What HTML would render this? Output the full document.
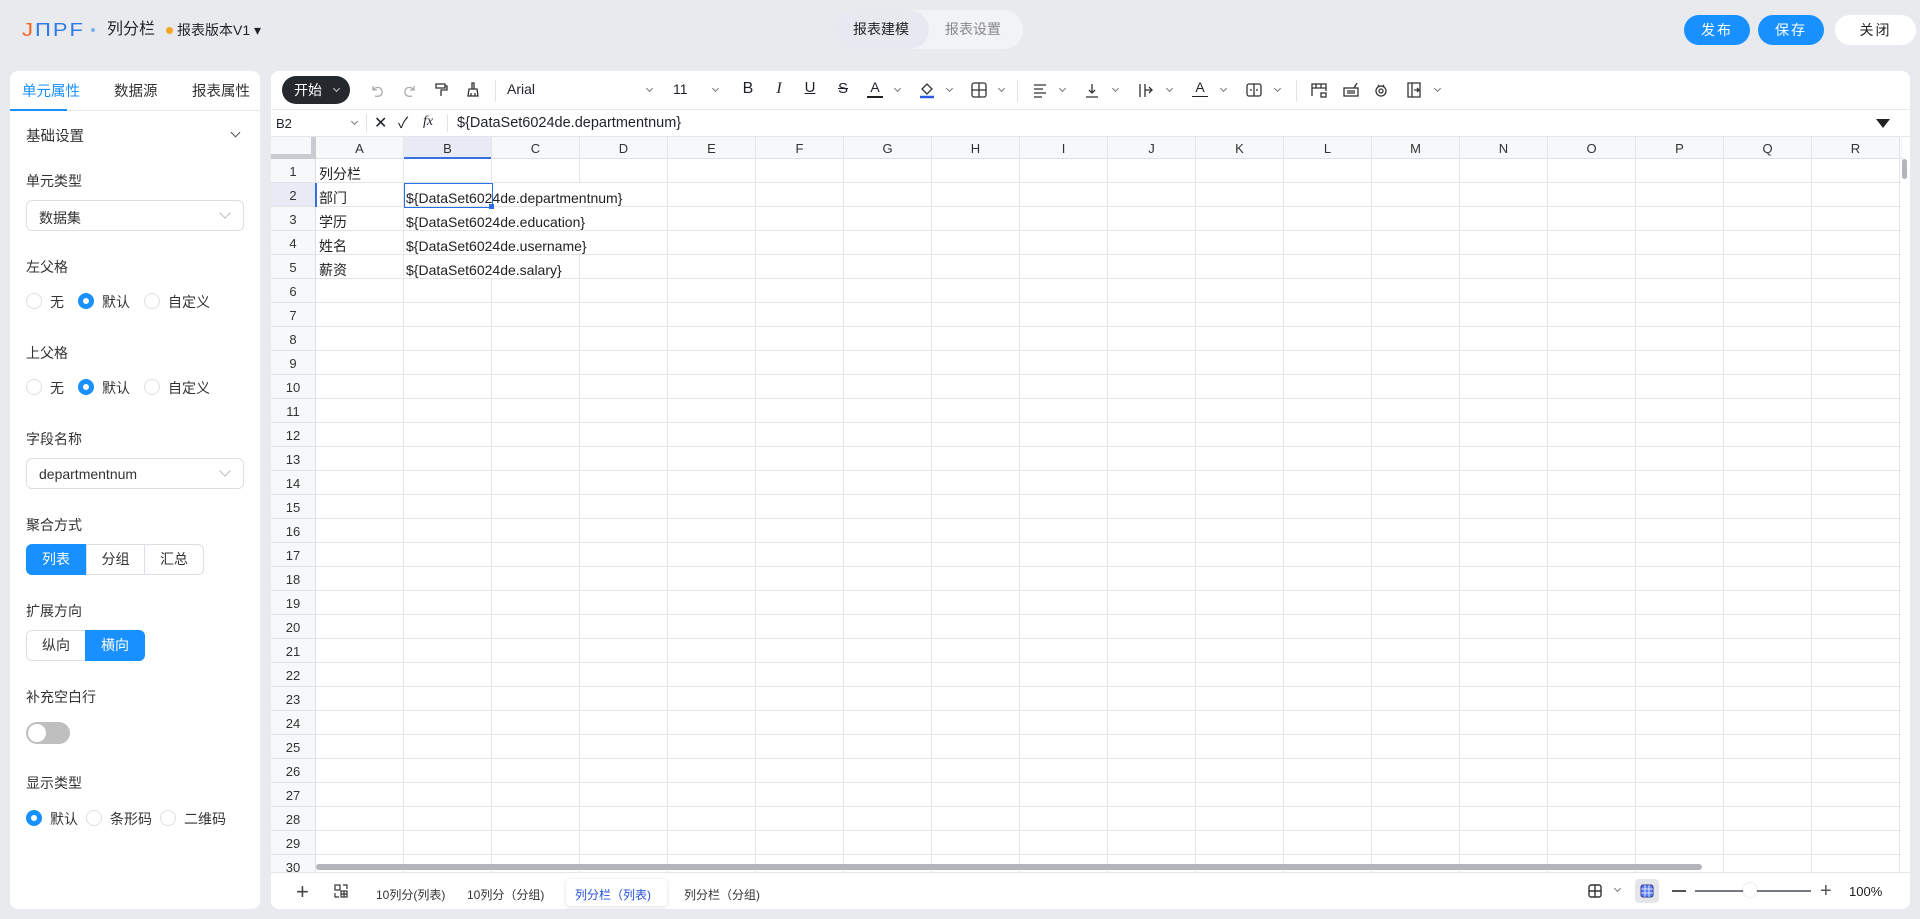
<!DOCTYPE html>
<html><head><meta charset="utf-8"><style>
*{box-sizing:border-box;margin:0;padding:0}
body{width:1920px;height:919px;background:#e9eaee;font-family:"Liberation Sans","Noto Sans CJK SC",sans-serif;color:#1f2329;position:relative;overflow:hidden;font-size:14px}
.a{position:absolute}
.panel{background:#fff;border-radius:8px}
.lbl{position:absolute;left:26px;font-size:14px;color:#333}
.radio{position:absolute;width:16px;height:16px;border:1px solid #dcdfe6;border-radius:50%;background:#fff}
.radio.on{border:5px solid #1890ff}
.rt{position:absolute;font-size:14px;color:#333}
.sel{position:absolute;left:26px;width:218px;height:31px;border:1px solid #dcdfe6;border-radius:6px;font-size:14px;padding:7px 12px;color:#333}
.sel:after{content:"";position:absolute;right:14px;top:8px;width:7px;height:7px;border-right:1px solid #bbb;border-bottom:1px solid #bbb;transform:rotate(45deg)}
.seg{position:absolute;height:31px;border:1px solid #dcdfe6;font-size:14px;text-align:center;line-height:29px;color:#333;background:#fff}
.seg.on{background:#1890ff;color:#fff;border-color:#1890ff}
.ic{position:absolute;top:80px;width:20px;height:20px}
.chev{position:absolute;top:86px;width:5px;height:5px;border-right:1px solid #777;border-bottom:1px solid #777;transform:rotate(45deg)}
.cell{position:absolute;font-size:14px;color:#222;line-height:24px;white-space:nowrap;padding-top:3px}
.rn{height:24px;line-height:26px;text-align:center;font-size:13px;color:#333;border-bottom:1px solid #e3e5e9}
.ch{position:absolute;top:137px;width:88px;height:22px;line-height:23px;text-align:center;font-size:13px;color:#333;border-right:1px solid #e3e5e9}
.btn{position:absolute;top:15px;height:30px;border-radius:15px;font-size:14px;text-align:center;line-height:30px;letter-spacing:2px}
.tab{position:absolute;top:884px;font-size:12px;color:#333;line-height:22px}
</style></head><body>
<!-- header -->
<div class="a" style="left:22px;top:17px;font-size:22px;letter-spacing:2px;line-height:26px;transform:scaleY(0.85)"><span style="color:#f0621f">J</span><span style="color:#2f7be8">ΠPF</span></div>
<div class="a" style="left:91px;top:28px;width:4px;height:4px;border-radius:50%;background:#7fb0ee"></div>
<div class="a" style="left:107px;top:19px;font-size:16px;line-height:22px">列分栏</div>
<div class="a" style="left:166px;top:27px;width:7px;height:7px;border-radius:50%;background:#f5a623"></div>
<div class="a" style="left:177px;top:20px;font-size:14px;line-height:20px">报表版本V1 ▾</div>
<div class="a" style="left:833px;top:10px;width:190px;height:39px;border-radius:20px;background:#f2f3f6"></div>
<div class="a" style="left:833px;top:10px;width:96px;height:39px;border-radius:20px;background:#e6e9f0;text-align:center;line-height:39px;font-size:14px;color:#222">报表建模</div>
<div class="a" style="left:945px;top:10px;line-height:39px;font-size:14px;color:#888">报表设置</div>
<div class="btn" style="left:1684px;width:66px;background:#1890ff;color:#fff">发布</div>
<div class="btn" style="left:1758px;width:66px;background:#1890ff;color:#fff">保存</div>
<div class="btn" style="left:1835px;width:81px;background:#fff;color:#222">关闭</div>

<!-- left panel -->
<div class="a panel" style="left:10px;top:71px;width:250px;height:838px"></div>
<div class="a" style="left:10px;top:110px;width:250px;height:1px;background:#e8e8e8"></div>
<div class="a" style="left:10px;top:109px;width:57px;height:2px;background:#1890ff"></div>
<div class="a" style="left:22px;top:80px;font-size:14.5px;color:#1890ff">单元属性</div>
<div class="a" style="left:114px;top:80px;font-size:14.5px;color:#333">数据源</div>
<div class="a" style="left:192px;top:80px;font-size:14.5px;color:#333">报表属性</div>
<div class="lbl" style="left:26px;top:125px;font-size:14.5px">基础设置</div>
<div class="a" style="left:232px;top:129px;width:7px;height:7px;border-right:1px solid #555;border-bottom:1px solid #555;transform:rotate(45deg)"></div>
<div class="lbl" style="top:171px">单元类型</div>
<div class="sel" style="top:200px">数据集</div>
<div class="lbl" style="top:257px">左父格</div>
<div class="radio" style="left:26px;top:293px"></div><div class="rt" style="left:50px;top:292px">无</div>
<div class="radio on" style="left:78px;top:293px"></div><div class="rt" style="left:102px;top:292px">默认</div>
<div class="radio" style="left:144px;top:293px"></div><div class="rt" style="left:168px;top:292px">自定义</div>
<div class="lbl" style="top:343px">上父格</div>
<div class="radio" style="left:26px;top:379px"></div><div class="rt" style="left:50px;top:378px">无</div>
<div class="radio on" style="left:78px;top:379px"></div><div class="rt" style="left:102px;top:378px">默认</div>
<div class="radio" style="left:144px;top:379px"></div><div class="rt" style="left:168px;top:378px">自定义</div>
<div class="lbl" style="top:429px">字段名称</div>
<div class="sel" style="top:458px">departmentnum</div>
<div class="lbl" style="top:515px">聚合方式</div>
<div class="seg on" style="left:26px;top:544px;width:60px;border-radius:6px 0 0 6px">列表</div>
<div class="seg" style="left:86px;top:544px;width:59px">分组</div>
<div class="seg" style="left:144px;top:544px;width:60px;border-radius:0 6px 6px 0">汇总</div>
<div class="lbl" style="top:601px">扩展方向</div>
<div class="seg" style="left:26px;top:630px;width:60px;border-radius:6px 0 0 6px">纵向</div>
<div class="seg on" style="left:85px;top:630px;width:60px;border-radius:0 6px 6px 0">横向</div>
<div class="lbl" style="top:687px">补充空白行</div>
<div class="a" style="left:26px;top:722px;width:44px;height:22px;border-radius:11px;background:#bfbfbf"></div>
<div class="a" style="left:28px;top:724px;width:18px;height:18px;border-radius:50%;background:#fff"></div>
<div class="lbl" style="top:773px">显示类型</div>
<div class="radio on" style="left:26px;top:810px"></div><div class="rt" style="left:50px;top:809px">默认</div>
<div class="radio" style="left:86px;top:810px"></div><div class="rt" style="left:110px;top:809px">条形码</div>
<div class="radio" style="left:160px;top:810px"></div><div class="rt" style="left:184px;top:809px">二维码</div>

<!-- main panel -->
<div class="a panel" style="left:271px;top:71px;width:1639px;height:838px"></div>
<div class="a" style="left:282px;top:76px;width:68px;height:28px;border-radius:14px;background:#25282d;color:#fff;font-size:14px;line-height:28px;padding-left:12px">开始<span style="position:absolute;right:11px;top:10px;width:5px;height:5px;border-right:1px solid #ccc;border-bottom:1px solid #ccc;transform:rotate(45deg)"></span></div>
<svg class="ic" style="left:367px" viewBox="0 0 20 20" fill="none" stroke="#aaa" stroke-width="1.3"><path d="M6 6v4h4M6 10c2-3 8-4 9 1s-4 6-7 5"/></svg>
<svg class="ic" style="left:400px" viewBox="0 0 20 20" fill="none" stroke="#aaa" stroke-width="1.3"><path d="M14 6v4h-4M14 10c-2-3-8-4-9 1s4 6 7 5"/></svg>
<svg class="ic" style="left:431px" viewBox="0 0 20 20" fill="none" stroke="#333" stroke-width="1.3"><path d="M5 4h9v4H5zM14 6h2v4h-6v6"/></svg>
<svg class="ic" style="left:463px" viewBox="0 0 20 20" fill="none" stroke="#333" stroke-width="1.3"><path d="M9 3h2v6h-2zM6 9h8l1 7H5zM8 13v3M12 13v3"/></svg>
<div class="a" style="left:495px;top:80px;width:1px;height:22px;background:#e3e3e3"></div>
<div class="a" style="left:507px;top:81px;font-size:14px">Arial</div>
<div class="chev" style="left:647px"></div>
<div class="a" style="left:673px;top:81px;font-size:14px">11</div>
<div class="chev" style="left:713px"></div>
<div class="a" style="left:740px;top:80px;font-size:16px;width:16px;text-align:center">B</div>
<div class="a" style="left:771px;top:80px;font-size:16px;font-style:italic;font-family:'Liberation Serif';width:16px;text-align:center">I</div>
<div class="a" style="left:802px;top:79px;font-size:15px;text-decoration:underline;width:16px;text-align:center">U</div>
<div class="a" style="left:835px;top:80px;font-size:15px;text-decoration:line-through;width:16px;text-align:center">S</div>
<div class="a" style="left:867px;top:79px;font-size:14px;width:16px;text-align:center;border-bottom:2px solid #222;line-height:17px">A</div><div class="chev" style="left:895px"></div>
<svg class="ic" style="left:917px" viewBox="0 0 20 20" fill="none" stroke="#333" stroke-width="1.3"><path d="M5 9l5-5 5 5-5 5z"/><path d="M3 17h14" stroke="#2f5bea" stroke-width="2.5"/></svg><div class="chev" style="left:947px"></div>
<svg class="ic" style="left:969px" viewBox="0 0 20 20" fill="none" stroke="#333" stroke-width="1.3"><rect x="3" y="3" width="14" height="14" rx="2"/><path d="M10 3v14M3 10h14"/></svg><div class="chev" style="left:999px"></div>
<div class="a" style="left:1017px;top:80px;width:1px;height:22px;background:#e3e3e3"></div>
<svg class="ic" style="left:1030px" viewBox="0 0 20 20" fill="none" stroke="#333" stroke-width="1.3"><path d="M4 5h12M4 9h9M4 13h12M4 17h8"/></svg><div class="chev" style="left:1060px"></div>
<svg class="ic" style="left:1082px" viewBox="0 0 20 20" fill="none" stroke="#333" stroke-width="1.3"><path d="M10 4v9M7 10l3 3 3-3M4 17h12"/></svg><div class="chev" style="left:1113px"></div>
<svg class="ic" style="left:1136px" viewBox="0 0 20 20" fill="none" stroke="#333" stroke-width="1.3"><path d="M4 4v13M9 4v13M9 10h7M13 7l3 3-3 3"/></svg><div class="chev" style="left:1167px"></div>
<div class="a" style="left:1192px;top:79px;font-size:14px;width:16px;text-align:center;border-bottom:1px solid #222;line-height:17px">A</div><div class="chev" style="left:1221px"></div>
<svg class="ic" style="left:1244px" viewBox="0 0 20 20" fill="none" stroke="#333" stroke-width="1.3"><rect x="3" y="4" width="14" height="12" rx="2"/><path d="M10 4v12M6 10h2M12 10h2"/></svg><div class="chev" style="left:1275px"></div>
<div class="a" style="left:1296px;top:80px;width:1px;height:22px;background:#e3e3e3"></div>
<svg class="ic" style="left:1309px" viewBox="0 0 20 20" fill="none" stroke="#333" stroke-width="1.3"><path d="M3 16V4h14v7M3 8h14M7 4v4M12 4v4"/><rect x="12" y="13" width="5" height="4"/></svg>
<svg class="ic" style="left:1341px" viewBox="0 0 20 20" fill="none" stroke="#333" stroke-width="1.3"><rect x="3" y="8" width="14" height="8"/><path d="M6 11h8M6 13h8M13 8l3-5"/></svg>
<svg class="ic" style="left:1371px" viewBox="0 0 20 20" fill="none" stroke="#333" stroke-width="1.3"><circle cx="10" cy="11" r="5"/><circle cx="10" cy="11" r="2"/><path d="M7 5l1 1M13 5l-1 1"/></svg>
<svg class="ic" style="left:1404px" viewBox="0 0 20 20" fill="none" stroke="#333" stroke-width="1.3"><path d="M4 3h12v14H4zM8 3v14M10 10h5M13 8l2 2-2 2"/></svg><div class="chev" style="left:1435px"></div>
<div class="a" style="left:271px;top:109px;width:1639px;height:1px;background:#e8e8e8"></div>
<!-- formula bar -->
<div class="a" style="left:276px;top:116px;font-size:13px">B2</div>
<div class="chev" style="left:352px;top:119px"></div>
<div class="a" style="left:366px;top:114px;width:1px;height:18px;background:#e3e3e3"></div>
<div class="a" style="left:374px;top:112px;font-size:16px;line-height:24px">✕</div>
<div class="a" style="left:398px;top:112px;font-size:15px;line-height:24px">✓</div>
<div class="a" style="left:423px;top:114px;font-size:14px;font-style:italic;font-family:'Liberation Serif'">fx</div>
<div class="a" style="left:447px;top:114px;width:1px;height:18px;background:#e3e3e3"></div>
<div class="a" style="left:457px;top:115px;font-size:14.5px">${DataSet6024de.departmentnum}</div>
<div class="a" style="left:1876px;top:119px;width:0;height:0;border-left:7px solid transparent;border-right:7px solid transparent;border-top:9px solid #222"></div>
<div class="a" style="left:271px;top:136px;width:1639px;height:1px;background:#e3e5e9"></div>

<!-- column header -->
<div class="a" style="left:271px;top:137px;width:1632px;height:22px;background:#f7f8fa;border-bottom:1px solid #dcdfe4"></div>
<div class="a" style="left:311px;top:137px;width:5px;height:22px;background:#c9cbd0"></div>
<div class="a" style="left:271px;top:154px;width:45px;height:5px;background:#c9cbd0"></div>
<div class="a" style="left:404px;top:137px;width:88px;height:22px;background:#e8ebf5;border-bottom:2px solid #3a6fe0"></div>
<div class="ch" style="left:316px">A</div><div class="ch" style="left:404px">B</div><div class="ch" style="left:492px">C</div><div class="ch" style="left:580px">D</div><div class="ch" style="left:668px">E</div><div class="ch" style="left:756px">F</div><div class="ch" style="left:844px">G</div><div class="ch" style="left:932px">H</div><div class="ch" style="left:1020px">I</div><div class="ch" style="left:1108px">J</div><div class="ch" style="left:1196px">K</div><div class="ch" style="left:1284px">L</div><div class="ch" style="left:1372px">M</div><div class="ch" style="left:1460px">N</div><div class="ch" style="left:1548px">O</div><div class="ch" style="left:1636px">P</div><div class="ch" style="left:1724px">Q</div><div class="ch" style="left:1812px">R</div>

<!-- grid -->
<div class="a" style="left:316px;top:159px;width:1587px;height:720px;background-image:linear-gradient(to right,transparent 87px,#e3e5e9 87px),linear-gradient(to bottom,transparent 23px,#e3e5e9 23px);background-size:88px 100%,100% 24px"></div>
<div class="a" style="left:271px;top:159px;width:45px;height:720px;background:#f7f8fa;border-right:1px solid #dcdfe4">
<div class="rn">1</div><div class="rn" style="background:#e8ebf5">2</div><div class="rn">3</div><div class="rn">4</div><div class="rn">5</div><div class="rn">6</div><div class="rn">7</div><div class="rn">8</div><div class="rn">9</div><div class="rn">10</div><div class="rn">11</div><div class="rn">12</div><div class="rn">13</div><div class="rn">14</div><div class="rn">15</div><div class="rn">16</div><div class="rn">17</div><div class="rn">18</div><div class="rn">19</div><div class="rn">20</div><div class="rn">21</div><div class="rn">22</div><div class="rn">23</div><div class="rn">24</div><div class="rn">25</div><div class="rn">26</div><div class="rn">27</div><div class="rn">28</div><div class="rn">29</div><div class="rn">30</div>
</div>
<div class="a" style="left:315px;top:183px;width:2px;height:24px;background:#3a6fe0"></div>
<div class="a" style="left:404px;top:183px;width:230px;height:23px;background:#fff"></div>
<div class="a" style="left:404px;top:207px;width:190px;height:23px;background:#fff"></div>
<div class="a" style="left:404px;top:231px;width:190px;height:23px;background:#fff"></div>
<div class="a" style="left:404px;top:255px;width:170px;height:23px;background:#fff"></div>
<div class="a" style="left:579px;top:255px;width:1px;height:24px;background:#e3e5e9"></div>
<div class="a" style="left:404px;top:183px;width:89px;height:25px;border:1px solid #2b6de5"></div>
<div class="a" style="left:489px;top:204px;width:5px;height:5px;background:#2b6de5"></div>
<div class="cell" style="left:319px;top:159px">列分栏</div>
<div class="cell" style="left:319px;top:183px">部门</div>
<div class="cell" style="left:319px;top:207px">学历</div>
<div class="cell" style="left:319px;top:231px">姓名</div>
<div class="cell" style="left:319px;top:255px">薪资</div>
<div class="cell" style="left:406px;top:183px">${DataSet6024de.departmentnum}</div>
<div class="cell" style="left:406px;top:207px">${DataSet6024de.education}</div>
<div class="cell" style="left:406px;top:231px">${DataSet6024de.username}</div>
<div class="cell" style="left:406px;top:255px">${DataSet6024de.salary}</div>
<div class="a" style="left:1901px;top:159px;width:9px;height:720px;background:#fff"></div>
<div class="a" style="left:1902px;top:159px;width:5px;height:20px;border-radius:3px;background:#b3b5ba"></div>
<div class="a" style="left:316px;top:864px;width:1386px;height:6px;border-radius:3px;background:#b3b5ba"></div>

<!-- bottom bar -->
<div class="a" style="left:271px;top:872px;width:1639px;height:37px;background:#fff;border-top:1px solid #e3e5e9;border-radius:0 0 8px 8px"></div>
<div class="a" style="left:296px;top:880px;font-size:22px;color:#444;line-height:24px">+</div>
<svg class="a" style="left:333px;top:883px" width="16" height="16" viewBox="0 0 16 16" fill="none" stroke="#333" stroke-width="1.2"><rect x="2" y="2" width="5" height="5"/><rect x="8" y="8" width="6" height="6"/><path d="M11 8v6M8 11h6M10 2h4v4M2 10v4h4"/></svg>
<div class="tab" style="left:376px">10列分(列表)</div>
<div class="tab" style="left:467px">10列分（分组)</div>
<div class="a" style="left:566px;top:879px;width:101px;height:27px;border-radius:4px;background:#fff;box-shadow:0 1px 4px rgba(0,0,0,.12)"></div>
<div class="tab" style="left:575px;color:#2452d6">列分栏（列表)</div>
<div class="tab" style="left:684px">列分栏（分组)</div>
<svg class="a" style="left:1587px;top:883px" width="16" height="16" viewBox="0 0 16 16" fill="none" stroke="#333" stroke-width="1.4"><rect x="2" y="2" width="12" height="12" rx="2"/><path d="M8 2v12M2 8h12"/></svg>
<div class="a" style="left:1615px;top:886px;width:5px;height:5px;border-right:1px solid #777;border-bottom:1px solid #777;transform:rotate(45deg)"></div>
<div class="a" style="left:1635px;top:879px;width:24px;height:24px;border-radius:4px;background:#e4e6ea"></div>
<svg class="a" style="left:1639px;top:883px" width="16" height="16" viewBox="0 0 16 16" fill="#5b7cf5" stroke="#2a3a8a" stroke-width="1"><rect x="2" y="2" width="12" height="12" rx="2"/><path d="M6 2v12M10 2v12M2 6h12M2 10h12" stroke="#fff" stroke-width=".8"/></svg>
<div class="a" style="left:1672px;top:890px;width:14px;height:2px;background:#555"></div>
<div class="a" style="left:1695px;top:890px;width:116px;height:2px;background:#757a85"></div>
<div class="a" style="left:1743px;top:883px;width:14px;height:14px;border-radius:50%;background:#fff;box-shadow:0 0 2px rgba(0,0,0,.2)"></div>
<div class="a" style="left:1820px;top:879px;font-size:20px;color:#555;line-height:24px">+</div>
<div class="a" style="left:1849px;top:884px;font-size:13px;color:#222">100%</div>
</body></html>
